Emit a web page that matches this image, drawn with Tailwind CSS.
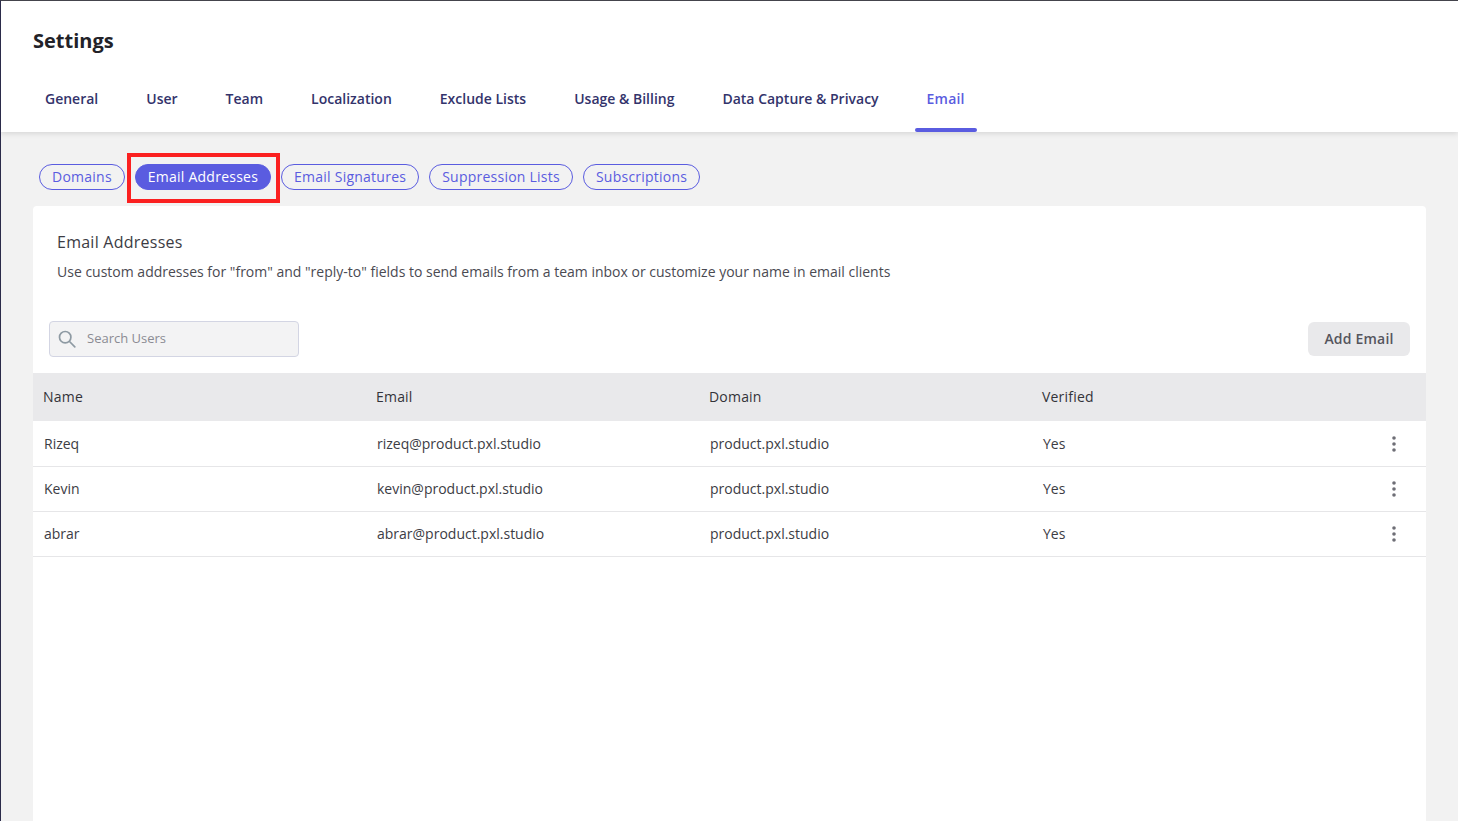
<!DOCTYPE html>
<html><head><meta charset="utf-8"><script src="https://cdn.jsdelivr.net/npm/@tailwindcss/browser@4"></script></head>
<body class="m-0">
<div class="h-[821px] w-[1458px] overflow-hidden bg-[#f2f2f2] border-t border-l border-t-[#44444c] border-l-[#2b2b4a] font-['Open_Sans','Noto_Sans',sans-serif] flex flex-col">
  <header class="bg-white h-[131px] shrink-0 shadow-[0_1px_6px_rgba(0,0,0,0.14)] relative flex flex-col">
    <h1 class="text-[20px] leading-[28px] font-bold text-[#222228] pl-[32px] pt-[26px]">Settings</h1>
    <nav class="flex gap-6 pl-[32px] mt-[28px] text-[14px] font-semibold text-[#33336b]">
      <a class="px-3 h-[49px] pt-[6px] leading-[20px]">General</a>
      <a class="px-3 h-[49px] pt-[6px] leading-[20px]">User</a>
      <a class="px-3 h-[49px] pt-[6px] leading-[20px]">Team</a>
      <a class="px-3 h-[49px] pt-[6px] leading-[20px]">Localization</a>
      <a class="px-3 h-[49px] pt-[6px] leading-[20px]">Exclude Lists</a>
      <a class="px-3 h-[49px] pt-[6px] leading-[20px]">Usage &amp; Billing</a>
      <a class="px-3 h-[49px] pt-[6px] leading-[20px]">Data Capture &amp; Privacy</a>
      <a class="px-3 h-[49px] pt-[6px] leading-[20px] text-[#5a5ce0] tracking-[0.2px] relative">Email<span class="absolute left-0 right-0 bottom-0 h-[4px] rounded-full bg-[#5a5ce0]"></span></a>
    </nav>
  </header>
  <div class="flex gap-[10px] pl-[38px] pt-[32px] text-[14px] leading-[24px] font-medium tracking-[0.24px] text-[#5a5ce0]">
    <span class="h-[26px] px-3 border border-[#5a5ce0] rounded-full">Domains</span>
    <span class="h-[26px] px-3 border border-[#5a5ce0] rounded-full bg-[#5a5ce0] text-white relative">Email Addresses<span class="absolute left-[-9px] right-[-10px] top-[-12px] bottom-[-14px] border-4 border-[#fb2020]"></span></span>
    <span class="h-[26px] px-3 border border-[#5a5ce0] rounded-full">Email Signatures</span>
    <span class="h-[26px] px-3 border border-[#5a5ce0] rounded-full">Suppression Lists</span>
    <span class="h-[26px] px-3 border border-[#5a5ce0] rounded-full">Subscriptions</span>
  </div>
  <main class="ml-[32px] mr-[32px] mt-[16px] bg-white rounded-t grow">
    <div class="pl-[24px] pt-[25px]">
      <h2 class="text-[16px] leading-[22px] font-medium tracking-[0.25px] text-[#3c3c44]">Email Addresses</h2>
      <p class="text-[14px] leading-[20px] mt-[9px] text-[#4a4a52]">Use custom addresses for "from" and "reply-to" fields to send emails from a team inbox or customize your name in email clients</p>
    </div>
    <div class="flex items-center justify-between pl-[16px] pr-[16px] mt-[39px]">
      <div class="w-[250px] h-[36px] rounded border border-[#d3d5e3] bg-[#f3f3f4] flex items-center pl-[8px] gap-[11px]">
        <svg width="18" height="18" viewBox="0 0 18 18" fill="none" stroke="#8e9aa3" stroke-width="1.7" stroke-linecap="round"><circle cx="7.2" cy="7.2" r="5.7"/><path d="M11.5 11.5 16.8 16.8"/></svg>
        <span class="text-[13px] text-[#8b8b93]">Search Users</span>
      </div>
      <button class="w-[102px] h-[34px] rounded-md bg-[#e9e9eb] text-[14px] leading-[32px] font-semibold tracking-[0.2px] text-[#55555d]">Add Email</button>
    </div>
    <table class="w-full mt-[16px] border-collapse text-[14px] table-fixed">
      <thead><tr class="bg-[#e9e9eb] h-[48px] text-left text-[#333339] tracking-[0.2px]">
        <th class="font-medium pl-[10px] pb-[2px] w-[333px]">Name</th><th class="font-medium pl-[10px] pb-[2px] w-[333px]">Email</th><th class="font-medium pl-[10px] pb-[2px] w-[333px]">Domain</th><th class="font-medium pl-[10px] pb-[2px] w-[333px]">Verified</th><th></th>
      </tr></thead>
      <tbody class="text-[#3c3c44]">
        <tr class="h-[45px] border-b border-[#e6e6e8]"><td class="pl-[11px]">Rizeq</td><td class="pl-[11px]">rizeq@product.pxl.studio</td><td class="pl-[11px]">product.pxl.studio</td><td class="pl-[11px]">Yes</td><td><svg class="ml-[26px] mt-[1px]" width="6" height="16" viewBox="0 0 6 16" fill="#6e6e76"><circle cx="3" cy="2" r="1.8"/><circle cx="3" cy="8" r="1.8"/><circle cx="3" cy="14" r="1.8"/></svg></td></tr>
        <tr class="h-[45px] border-b border-[#e6e6e8]"><td class="pl-[11px]">Kevin</td><td class="pl-[11px]">kevin@product.pxl.studio</td><td class="pl-[11px]">product.pxl.studio</td><td class="pl-[11px]">Yes</td><td><svg class="ml-[26px]" width="6" height="16" viewBox="0 0 6 16" fill="#6e6e76"><circle cx="3" cy="2" r="1.8"/><circle cx="3" cy="8" r="1.8"/><circle cx="3" cy="14" r="1.8"/></svg></td></tr>
        <tr class="h-[45px] border-b border-[#e6e6e8]"><td class="pl-[11px]">abrar</td><td class="pl-[11px]">abrar@product.pxl.studio</td><td class="pl-[11px]">product.pxl.studio</td><td class="pl-[11px]">Yes</td><td><svg class="ml-[26px]" width="6" height="16" viewBox="0 0 6 16" fill="#6e6e76"><circle cx="3" cy="2" r="1.8"/><circle cx="3" cy="8" r="1.8"/><circle cx="3" cy="14" r="1.8"/></svg></td></tr>
      </tbody>
    </table>
  </main>
</div>
</body></html>
